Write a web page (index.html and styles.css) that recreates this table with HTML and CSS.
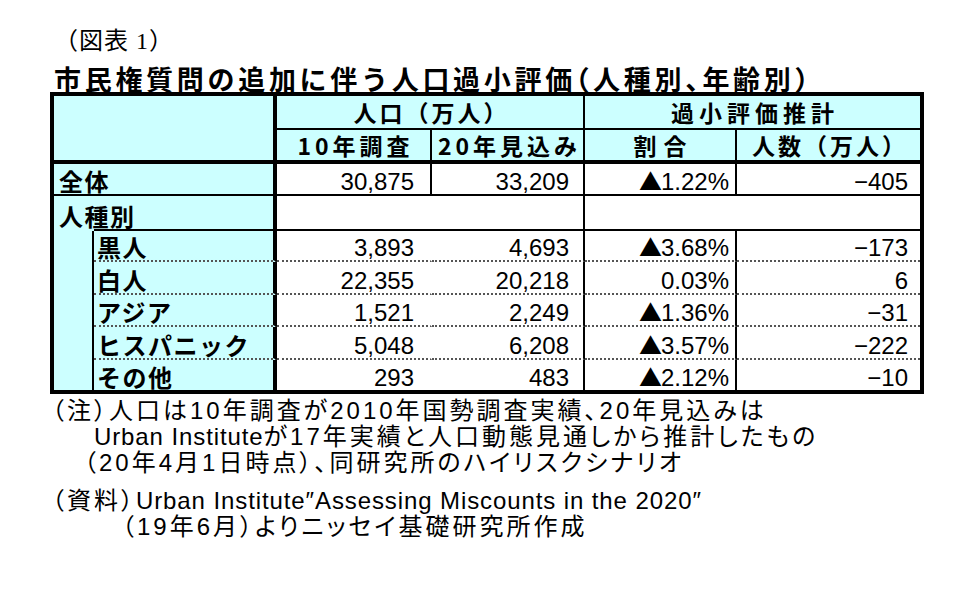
FILE: index.html
```html
<!DOCTYPE html>
<html lang="ja">
<head>
<meta charset="utf-8">
<title>市民権質問の追加に伴う人口過小評価</title>
<link rel="stylesheet" href="styles.css">
</head>
<body>
<div class="page">
  <div class="fig">（図表 1）</div>
  <h1 class="title">市民権質問の追加に伴う人口過小評価（人種別、年齢別）</h1>
  <div class="tbl">
    <table>
      <colgroup>
        <col class="ca"><col class="cb"><col class="cc"><col class="cd"><col class="ce"><col class="cf">
      </colgroup>
      <tr class="r1">
        <th class="cyan corner" colspan="2" rowspan="2"></th>
        <th class="h cyan br bb s3" colspan="2">人口（万人）</th>
        <th class="h cyan bb s5" colspan="2">過小評価推計</th>
      </tr>
      <tr class="r2">
        <th class="h cyan br bbB s4">10年調査</th>
        <th class="h cyan br bbB s4">20年見込み</th>
        <th class="h cyan br bbB s7">割合</th>
        <th class="h cyan bbB s3">人数（万人）</th>
      </tr>
      <tr class="r3">
        <td class="lab top cyan brB bb" colspan="2">全体</td>
        <td class="num nc br bb">30,875</td>
        <td class="num nd br bb">33,209</td>
        <td class="num ne br bb"><span class="tri">▲</span>1.22%</td>
        <td class="num nf bb">−405</td>
      </tr>
      <tr class="r4">
        <td class="lab top race brB" colspan="2">人種別</td>
        <td class="br bb" colspan="2"></td>
        <td class="bb" colspan="2"></td>
      </tr>
      <tr class="r5">
        <td class="cyan br" rowspan="5"></td>
        <td class="lab sub cyan brB bd">黒人</td>
        <td class="num nc brT bd">3,893</td>
        <td class="num nd br bd">4,693</td>
        <td class="num ne br bd"><span class="tri">▲</span>3.68%</td>
        <td class="num nf bd">−173</td>
      </tr>
      <tr class="r6">
        <td class="lab sub cyan brB bd">白人</td>
        <td class="num nc brT bd">22,355</td>
        <td class="num nd br bd">20,218</td>
        <td class="num ne br bd">0.03%</td>
        <td class="num nf bd">6</td>
      </tr>
      <tr class="r7">
        <td class="lab sub cyan brB bd">アジア</td>
        <td class="num nc brT bd">1,521</td>
        <td class="num nd br bd">2,249</td>
        <td class="num ne br bd"><span class="tri">▲</span>1.36%</td>
        <td class="num nf bd">−31</td>
      </tr>
      <tr class="r8">
        <td class="lab sub cyan brB bd">ヒスパニック</td>
        <td class="num nc brT bd">5,048</td>
        <td class="num nd br bd">6,208</td>
        <td class="num ne br bd"><span class="tri">▲</span>3.57%</td>
        <td class="num nf bd">−222</td>
      </tr>
      <tr class="r9">
        <td class="lab sub cyan brB">その他</td>
        <td class="num nc brT">293</td>
        <td class="num nd br">483</td>
        <td class="num ne br"><span class="tri">▲</span>2.12%</td>
        <td class="num nf">−10</td>
      </tr>
    </table>
  </div>
  <div class="notes">
    <p class="nl">（注）人口は10年調査が2010年国勢調査実績、20年見込みは</p>
    <p class="nl i2"><span class="lat">Urban Institute</span>が17年実績と人口動態見通しから推計したもの</p>
    <p class="nl i3">（20年4月1日時点）、同研究所のハイリスクシナリオ</p>
    <p class="nl src">（資料）<span class="lat">Urban Institute″Assessing Miscounts in the 2020″</span></p>
    <p class="nl i5">（19年6月）よりニッセイ基礎研究所作成</p>
  </div>
</div>
</body>
</html>
```
FILE: styles.css
```css
* { box-sizing: border-box; }
html, body { margin: 0; padding: 0; background: #fff; }
body {
  width: 979px;
  height: 601px;
  overflow: hidden;
  color: #000;
  font-family: "Noto Sans CJK JP", sans-serif;
}
.page { padding-top: 28px; }

.fig {
  margin-left: 54px;
  font-family: "Liberation Serif", "Noto Sans CJK JP", serif;
  font-size: 24px;
  line-height: 26px;
  height: 26px;
  letter-spacing: 1px;
}
.title {
  margin: 11px 0 0 54px;
  font-family: "Noto Sans CJK JP", sans-serif;
  font-size: 27px;
  line-height: 27px;
  height: 27px;
  font-weight: 700;
  letter-spacing: 3.7px;
  font-feature-settings: "halt";
  white-space: nowrap;
}

.tbl {
  margin-left: 50px;
  width: 874px;
  border: 4px solid #000;
}
table {
  border-collapse: separate;
  border-spacing: 0;
  table-layout: fixed;
  width: 866px;
}
col.ca { width: 40px; }
col.cb { width: 183px; }
col.cc { width: 155px; }
col.cd { width: 153px; }
col.ce { width: 152px; }
col.cf { width: 183px; }

tr.r1 { height: 34px; }
tr.r2 { height: 34px; }
tr.r3 { height: 32px; }
tr.r4 { height: 35px; }
tr.r5 { height: 31px; }
tr.r6 { height: 33px; }
tr.r7 { height: 32px; }
tr.r8 { height: 33px; }
tr.r9 { height: 30px; }

th, td {
  padding: 0;
  border: 0 solid #000;
  white-space: nowrap;
  background: #fff;
}
.cyan { background: #ccffff; }
.br { border-right: 2px solid #000; }
.brT { border-right: 2px solid transparent; }
.brB { border-right: 4px solid #000; }
.bb { border-bottom: 2px solid #000; }
.bbB { border-bottom: 4px solid #000; }
.bd { border-bottom: 2px dotted #555; }
.corner { border-right: 4px solid #000; border-bottom: 4px solid #000; }

.h {
  font-family: "Noto Sans CJK JP", sans-serif;
  font-weight: 700;
  font-size: 23px;
  line-height: 26px;
  text-align: center;
  vertical-align: middle;
}
.s3 { letter-spacing: 3px; padding-left: 3px; }
.s4 { letter-spacing: 4px; padding-left: 4px; }
.s5 { letter-spacing: 5px; padding-left: 5px; }
.s7 { letter-spacing: 7px; padding-left: 7px; }

.lab {
  font-family: "Noto Sans CJK JP", sans-serif;
  font-weight: 700;
  font-size: 24px;
  line-height: 24px;
  letter-spacing: 1.5px;
  text-align: left;
  vertical-align: bottom;
  padding-bottom: 1px;
}
.lab.top { padding-left: 5px; }
.lab.sub { padding-left: 3px; }
.race {
  background: #ccffff linear-gradient(#000, #000) no-repeat right bottom / calc(100% - 40px) 2px;
  padding-bottom: 3px;
}

.num {
  font-family: "Liberation Sans", "Noto Sans CJK JP", sans-serif;
  font-size: 24px;
  line-height: 24px;
  text-align: right;
  vertical-align: bottom;
}
.tri {
  font-family: "Noto Sans CJK JP", sans-serif;
  font-size: 23px;
  letter-spacing: -1px;
}
.nc { padding-right: 16px; }
.nd { padding-right: 14px; }
.ne { padding-right: 6px; }
.nf { padding-right: 12px; }

.notes {
  margin: 4px 0 0 52px;
  font-family: "Liberation Sans", "Noto Sans CJK JP", sans-serif;
  font-size: 24px;
  line-height: 26px;
  letter-spacing: 3px;
  font-feature-settings: "palt";
}
.nl { margin: 0; height: 26px; white-space: nowrap; }
.lat { font-size: 24px; letter-spacing: 0.9px; }
.i2 { padding-left: 42px; }
.i3 { padding-left: 32px; }
.src { margin-top: 12px; }
.i5 { padding-left: 70px; }
```
